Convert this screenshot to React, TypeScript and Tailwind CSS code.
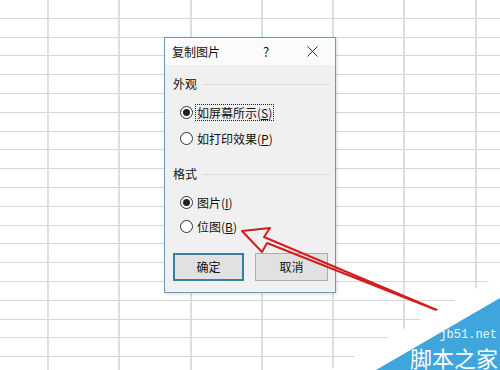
import { FC } from 'react';

const COLS = 8;
const ROWS = 20;

const Radio: FC<{ checked?: boolean }> = ({ checked }) => (
  <span className="flex h-[13px] w-[13px] shrink-0 items-center justify-center rounded-full border border-[#333] bg-white">
    {checked && <span className="h-[7px] w-[7px] rounded-full bg-[#222]" />}
  </span>
);

const Option: FC<{ label: string; hot: string; checked?: boolean; focused?: boolean }> = ({
  label,
  hot,
  checked,
  focused,
}) => (
  <div className="flex h-[18px] items-center pl-[7px]">
    <Radio checked={checked} />
    <span
      className={
        focused
          ? 'ml-[2px] border border-dotted border-[#222] px-[1px] leading-[15px]'
          : 'ml-[3px] px-[1px] leading-[15px]'
      }
    >
      {label}(<span className="underline">{hot}</span>)
    </span>
  </div>
);

const GroupLabel: FC<{ title: string }> = ({ title }) => (
  <div className="flex h-[16px] items-center">
    <span>{title}</span>
    <span className="ml-[5px] h-px flex-1 bg-[#dcdcdc]" />
  </div>
);

const Sheet: FC = () => (
  <div className="grid grid-cols-[49px_repeat(7,71.3px)] auto-rows-[18.8px]">
    {Array.from({ length: COLS * ROWS }).map((_, i) => (
      <div key={i} className="border-b border-r-2 border-b-[#d6d6d6] border-r-[#dedede]" />
    ))}
  </div>
);

const App: FC = () => {
  return (
    <div className="relative h-[370px] w-[500px] overflow-hidden bg-white font-['Noto_Sans_CJK_SC','Noto_Sans',sans-serif] text-[12px] text-[#111]">
      <Sheet />

      {/* dialog */}
      <div className="absolute left-[164px] top-[37px] flex h-[256px] w-[172px] flex-col border border-[#7b95a8] bg-[#f0f0f0] shadow-[1px_1px_3px_rgba(0,0,0,0.15)]">
        <div className="flex h-[27px] items-center bg-[#fbfbfb]">
          <span className="flex-1 pl-[7px]">复制图片</span>
          <span className="w-[46px] text-center text-[13px]">?</span>
          <span className="flex w-[46px] justify-center">
            <svg width="11" height="11" viewBox="0 0 11 11">
              <path d="M0.5 0.5 L10.5 10.5 M10.5 0.5 L0.5 10.5" stroke="#333" strokeWidth="1" fill="none" />
            </svg>
          </span>
        </div>
        <div className="flex flex-col pl-[8px] pr-[5px] pt-[11px]">
          <GroupLabel title="外观" />
          <div className="mt-[11px] flex flex-col gap-[8px]">
            <Option label="如屏幕所示" hot="S" checked focused />
            <Option label="如打印效果" hot="P" />
          </div>
          <div className="mt-[19px]">
            <GroupLabel title="格式" />
          </div>
          <div className="mt-[11px] flex flex-col gap-[6px]">
            <Option label="图片" hot="I" checked />
            <Option label="位图" hot="B" />
          </div>
          <div className="mt-[18px] flex gap-[11px]">
            <button className="h-[28px] w-[71px] border-2 border-[#3b7d9b] bg-[#e1e1e1] text-[12px]">确定</button>
            <button className="h-[28px] w-[73px] border border-[#adadad] bg-[#e1e1e1] text-[12px]">取消</button>
          </div>
        </div>
      </div>

      {/* arrow annotation */}
      <svg className="pointer-events-none absolute left-0 top-0" width="500" height="370" viewBox="0 0 500 370">
        <polygon
          points="242,231 270,228 264,237 444,313 267,243 262,252"
          fill="none"
          stroke="#d21e1e"
          strokeWidth="2"
          strokeLinejoin="round"
        />
        <polygon points="500,275 500,370 330,370" fill="#ffffff" />
        <polygon points="500,298 500,370 376,370" fill="#3fa5dd" />
      </svg>

      {/* watermark */}
      <div className="absolute right-[3px] top-[328px] font-['Liberation_Mono',monospace] text-[12px] leading-[14px] text-[#eaf7fd]">
        jb51.net
      </div>
      <div className="absolute right-[2px] top-[345px] text-[22px] leading-[24px] text-white">
        脚本之家
      </div>
    </div>
  );
};

export default App;
